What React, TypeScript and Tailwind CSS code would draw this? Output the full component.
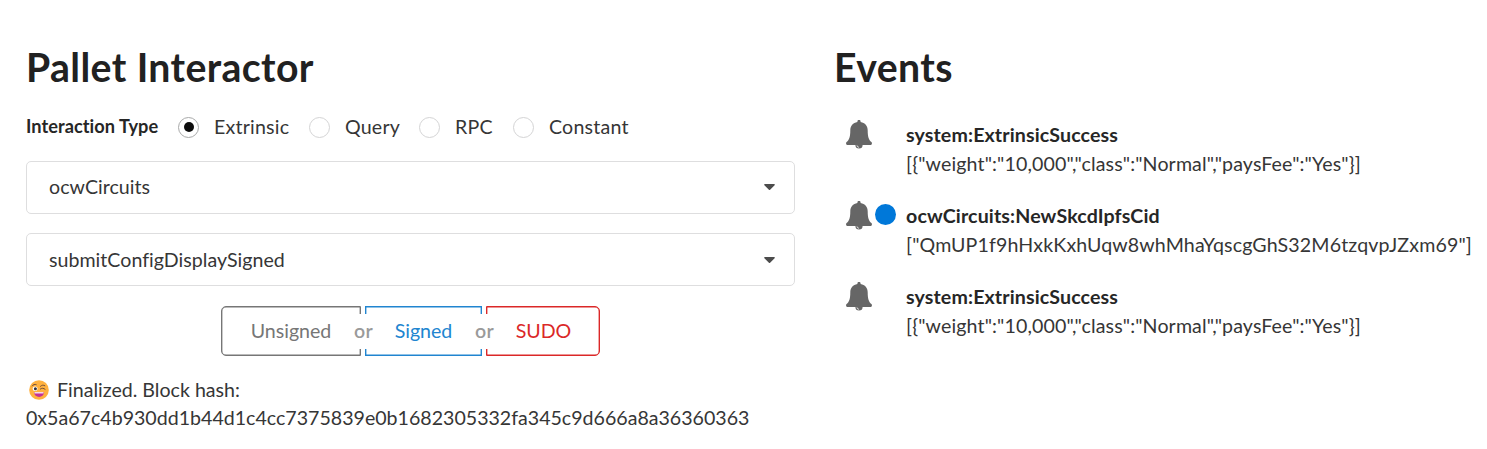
import React from "react";

function Radio({ label, checked = false, className = "" }: { label: string; checked?: boolean; className?: string }) {
  return (
    <label className={`flex shrink-0 items-center whitespace-nowrap ${className}`}>
      <span className={`mr-[15px] flex size-[21px] items-center justify-center rounded-full border ${checked ? "border-[#a8a9a9]" : "border-[#d4d4d5]"}`}>
        {checked && <span className="size-[10px] rounded-full bg-[#0d0d0d]" />}
      </span>
      <span className="tracking-[.2px]">{label}</span>
    </label>
  );
}

function Dropdown({ value, className = "" }: { value: string; className?: string }) {
  return (
    <div className={`flex h-[53px] w-[769px] items-center justify-between rounded-[5px] border border-[#dededf] pr-[19px] pl-[22px] ${className}`}>
      <span className="tracking-[.02px]">{value}</span>
      <svg className="h-[6px] w-[11px]" viewBox="0 0 11 6" fill="#4c4c4c">
        <path d="M.9 0h9.2c.7 0 1 .7.5 1.2L6.1 5.7c-.4.4-.8.4-1.2 0L.4 1.2C-.1.7.2 0 .9 0z" />
      </svg>
    </div>
  );
}

function Or() {
  return (
    <div className="relative w-1">
      <span className="absolute top-[8px] left-1/2 flex h-[35px] w-[24px] -translate-x-1/2 items-center justify-center bg-white pb-[2px] pl-[1px] text-[19.6px] font-semibold tracking-[.2px] text-[#9a9a9a]">
        or
      </span>
    </div>
  );
}

function Bell() {
  return (
    <svg className="h-[29px] w-[26px] shrink-0" viewBox="0 0 26 29" fill="#666">
      <path d="M11.4 2.1V1.5a1.6 1.6 0 0 1 3.2 0v.6c4.4.8 7.1 4 7.1 8.3 0 6.100 1 9.300 3.700 11.600.5.500.6 1 .5 1.700-.1.900-.8 1.400-1.700 1.400H1.800c-.9 0-1.600-.5-1.700-1.400-.1-.700 0-1.200.5-1.700C3.300 19.700 4.300 16.500 4.300 10.400c0-4.300 2.700-7.500 7.100-8.300z" />
      <path d="M9.400 25h7.200a3.600 3.600 0 0 1-7.200 0z" />
      <path d="M11 25.500c.1 1 .9 1.700 1.900 1.700" fill="none" stroke="#fff" strokeWidth=".9" />
    </svg>
  );
}

function Event({ title, detail, unread = false }: { title: string; detail: string; unread?: boolean }) {
  return (
    <div className="flex h-[81px] items-start">
      <div className="flex w-[60px] shrink-0 gap-[2.5px]">
        <Bell />
        {unread && <span className="mt-[3px] size-[21px] shrink-0 rounded-full bg-[#0078d9]" />}
      </div>
      <div className="whitespace-nowrap">
        <div className="h-[29px] leading-[30px] font-bold tracking-[.12px] text-[#262626]">{title}</div>
        <div className="h-[29px] leading-[30px] tracking-[.13px]">{detail}</div>
      </div>
    </div>
  );
}

function WinkingFace() {
  return (
    <svg className="size-[20px]" viewBox="0 0 20 20">
      <circle cx="10" cy="10" r="9.800" fill="#ffb13f" />
      <ellipse cx="6.100" cy="8.700" rx="2.500" ry="2.300" fill="#fff" />
      <circle cx="6.400" cy="8.800" r="1.500" fill="#35313b" />
      <path d="M3.200 5.900c1-1.400 2.500-1.800 4-1.300M11.500 6.300c1.400-1.300 2.700-1.500 4.300-.6M11.400 9c1.400-1 3-1.100 4.700.3" fill="none" stroke="#6f4c3c" strokeWidth="1" strokeLinecap="round" />
      <path d="M5 12.200h10.100c-.3 2.900-2.300 4.700-5 4.700S5.300 15 5 12.200z" fill="#c53096" />
      <path d="M5.500 12.200h9v1.200h-9z" fill="#fff" />
    </svg>
  );
}

export default function App() {
  return (
    <main className="flex h-[449px] w-[1487px] overflow-hidden bg-white font-['Lato',sans-serif] text-[19.6px] text-[#363636]">
      <section className="ml-[26px] flex w-[769px] shrink-0 flex-col">
        <h1 className="mt-[42px] h-[51px] text-[39.2px] leading-[50px] font-bold tracking-[.4px] text-[#212121]">Pallet Interactor</h1>
        <div className="mt-[20px] flex h-[28px] items-center">
          <span className="w-[152px] shrink-0 text-[18.2px] font-bold tracking-[.05px] text-[#262626]">Interaction Type</span>
          <Radio label="Extrinsic" checked className="w-[131px]" />
          <Radio label="Query" className="w-[110px]" />
          <Radio label="RPC" className="w-[94px]" />
          <Radio label="Constant" />
        </div>
        <div className="mt-[20px] flex flex-col gap-[19px]">
          <Dropdown value="ocwCircuits" className="pb-[2px]" />
          <Dropdown value="submitConfigDisplaySigned" />
        </div>
        <div className="mt-[20px] ml-[195px] flex h-[50px]">
          <button className="w-[140px] rounded-l-[5px] border border-[#767676] text-[#767676] shadow-[inset_0_0_0_.4px_#767676]">Unsigned</button>
          <Or />
          <button className="w-[117px] border border-[#2185d0] text-[#2185d0] shadow-[inset_0_0_0_.4px_#2185d0]">Signed</button>
          <Or />
          <button className="w-[114px] rounded-r-[5px] border border-[#db2828] pl-[1px] text-[#db2828] shadow-[inset_0_0_0_.4px_#db2828]">SUDO</button>
        </div>
        <div className="mt-[20px] leading-[28px]">
          <div className="flex h-[28px] items-center gap-[8px] pl-[3px]">
            <WinkingFace />
            <span>Finalized. Block hash:</span>
          </div>
          <div>0x5a67c4b930dd1b44d1c4cc7375839e0b1682305332fa345c9d666a8a36360363</div>
        </div>
      </section>
      <section className="ml-[39px] w-[653px] shrink-0">
        <h1 className="mt-[42px] h-[51px] text-[39.2px] leading-[50px] font-bold tracking-[.4px] text-[#212121]">Events</h1>
        <div className="mt-[27px] pl-[12px]">
          <Event title="system:ExtrinsicSuccess" detail={'[{"weight":"10,000","class":"Normal","paysFee":"Yes"}]'} />
          <Event title="ocwCircuits:NewSkcdIpfsCid" detail={'["QmUP1f9hHxkKxhUqw8whMhaYqscgGhS32M6tzqvpJZxm69"]'} unread />
          <Event title="system:ExtrinsicSuccess" detail={'[{"weight":"10,000","class":"Normal","paysFee":"Yes"}]'} />
        </div>
      </section>
    </main>
  );
}
